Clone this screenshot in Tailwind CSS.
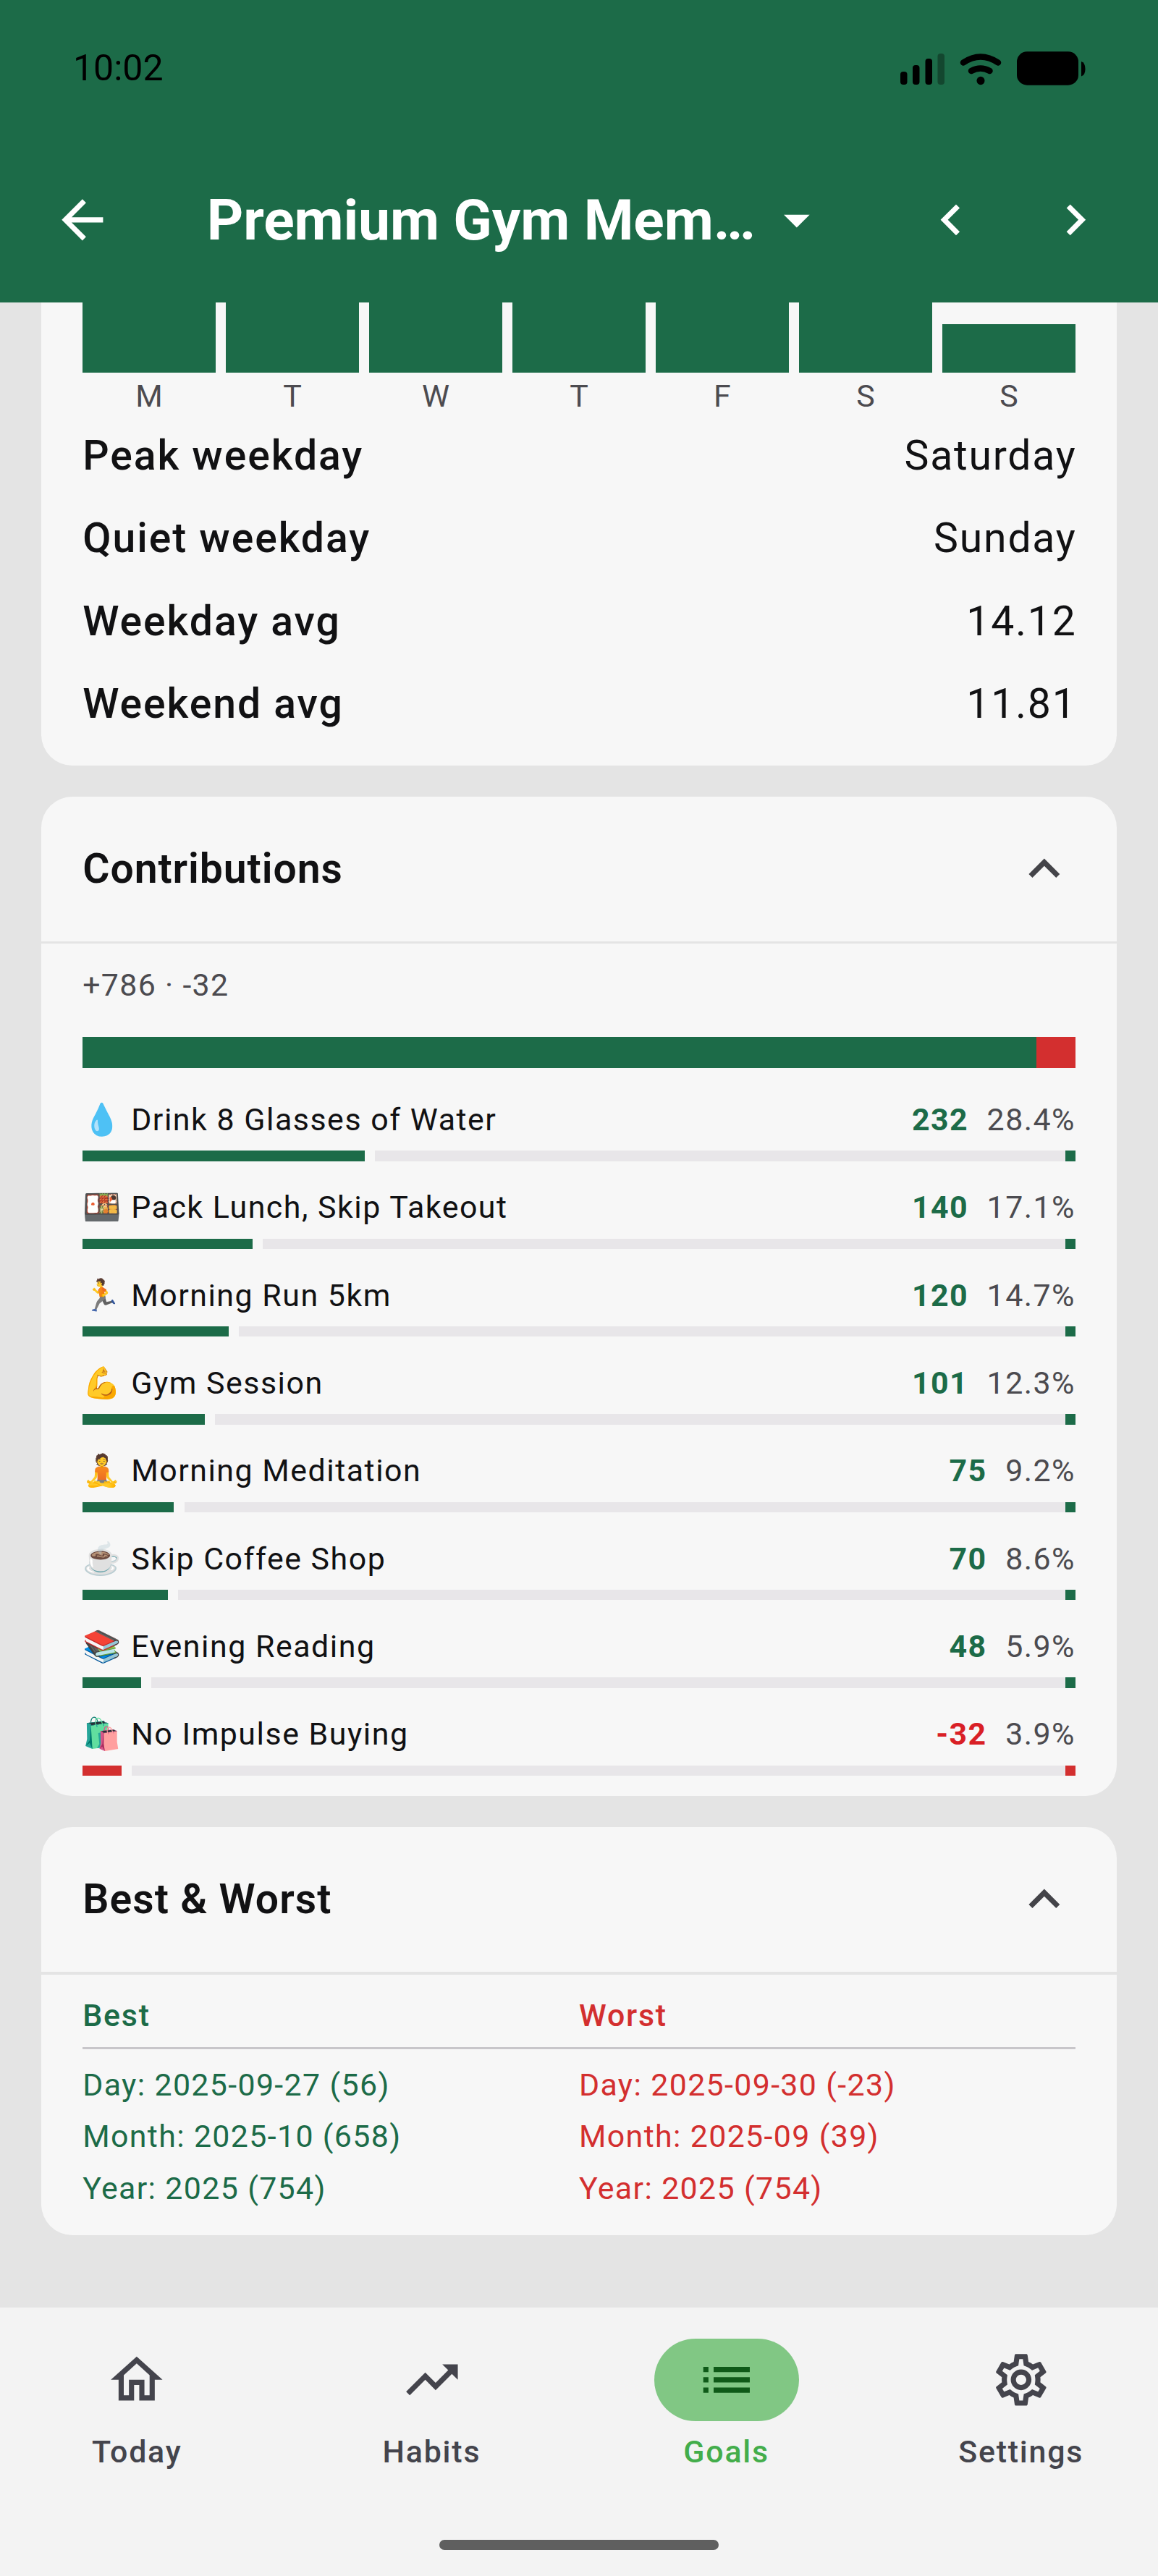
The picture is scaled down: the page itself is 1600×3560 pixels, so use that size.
<!DOCTYPE html>
<html lang="en">

<head>
  <meta charset="UTF-8">
  <meta name="viewport" content="width=device-width, initial-scale=1.0">
  <title>Goal Statistics</title>
  <script src="https://cdn.jsdelivr.net/npm/@tailwindcss/browser@4"></script>
</head>

<body class="bg-[#e4e4e4]">
  <div class="w-[1600px] h-[3560px] flex flex-col overflow-hidden bg-[#e4e4e4] text-[#111113] font-[Roboto,sans-serif]">

    <!-- Header -->
    <header class="h-[418px] shrink-0 bg-[#1c6b48] flex flex-col">
      <div class="h-[189.4px] pb-[2px] pl-[101px] pr-[99px] flex items-center justify-between text-black">
        <span class="text-[50px] leading-[58px]">10:02</span>
        <svg class="w-[258px] h-[50px]" viewBox="1243 68 258 50" fill="currentColor">
          <rect x="1244" y="98" width="9.5" height="18" rx="4" />
          <rect x="1261" y="89" width="9.5" height="27" rx="4" />
          <rect x="1278.5" y="80" width="9.5" height="36" rx="4" />
          <rect x="1295.5" y="73" width="9.5" height="43" rx="4" fill="#13472f" />
          <g fill="none" stroke="currentColor" stroke-width="8.5" stroke-linecap="round">
            <path d="M1331 85.5Q1354.800 69.500 1379 85.500" />
            <path d="M1342 97Q1354.800 90 1367.500 97" />
          </g>
          <ellipse cx="1355" cy="110.500" rx="5.500" ry="5.800" />
          <rect x="1405" y="70.300" width="85" height="46.400" rx="14" />
          <path d="M1494 84q5.500 1.500 5.500 10.300t-5.500 10.300z" />
        </svg>
      </div>
      <div class="h-[228.6px] pl-[28.6px] pr-[28.6px] flex items-center text-white">
        <button class="w-[171.4px] h-[171.4px] flex items-center justify-center">
          <svg class="w-[85.7px] h-[85.7px]" viewBox="0 0 24 24" fill="currentColor"><path d="M20 11H7.830l5.590-5.590L12 4l-8 8 8 8 1.410-1.410L7.830 13H20v-2z" /></svg>
        </button>
        <h1 class="ml-[85.7px] w-[772px] text-[78.6px] leading-[100px] tracking-[-0.12px] font-bold whitespace-nowrap">Premium Gym Mem…</h1>
        <svg class="w-[85.7px] h-[85.7px] shrink-0" viewBox="0 0 24 24" fill="currentColor"><path d="M7 10l5 5 5-5z" /></svg>
        <div class="ml-auto flex">
          <button class="w-[171.4px] h-[171.4px] flex items-center justify-center">
            <svg class="w-[85.7px] h-[85.7px]" viewBox="0 0 24 24" fill="currentColor"><path d="M15.410 7.410L14 6l-6 6 6 6 1.410-1.410L10.830 12z" /></svg>
          </button>
          <button class="w-[171.4px] h-[171.4px] flex items-center justify-center">
            <svg class="w-[85.7px] h-[85.7px]" viewBox="0 0 24 24" fill="currentColor"><path d="M10 6L8.590 7.410 13.170 12l-4.580 4.590L10 18l6-6z" /></svg>
          </button>
        </div>
      </div>
    </header>

    <main class="h-[2771px] shrink-0 px-[57.1px] flex flex-col gap-[42.9px]">

      <!-- Weekdays -->
      <section class="h-[640px] shrink-0 rounded-b-[43px] bg-[#f7f7f7] px-[57.1px]">
        <div id="weekday-bars" class="h-[97.4px] flex items-end gap-[14.3px]"></div>
        <div id="weekday-labels" class="pt-[3.5px] flex gap-[14.3px] text-[42.9px] leading-[57.1px] text-[#4c4b50]"></div>
        <dl class="mt-[11px] flex flex-col gap-[28.6px] text-[57.1px] leading-[85.7px]">
          <div class="flex justify-between"><dt class="font-medium tracking-[1.95px]">Peak weekday</dt><dd class="tracking-[1.79px] -mr-[1.8px]">Saturday</dd></div>
          <div class="flex justify-between"><dt class="font-medium tracking-[1.95px]">Quiet weekday</dt><dd class="tracking-[1.79px] -mr-[1.8px]">Sunday</dd></div>
          <div class="flex justify-between"><dt class="font-medium tracking-[1.95px]">Weekday avg</dt><dd class="tracking-[1.79px] -mr-[1.8px]">14.12</dd></div>
          <div class="flex justify-between"><dt class="font-medium tracking-[1.95px]">Weekend avg</dt><dd class="tracking-[1.79px] -mr-[1.8px]">11.81</dd></div>
        </dl>
      </section>

      <!-- Contributions -->
      <section class="h-[1381.3px] shrink-0 rounded-[43px] bg-[#f7f7f7]">
        <div class="h-[200px] px-[57.1px] flex items-center justify-between">
          <h2 class="text-[57.1px] leading-[85.7px] tracking-[0.92px] font-semibold">Contributions</h2>
          <svg class="w-[85.7px] h-[85.7px] text-[#444449]" viewBox="0 0 24 24" fill="currentColor"><path d="M12 8l-6 6 1.410 1.410L12 10.830l4.590 4.580L18 14z" /></svg>
        </div>
        <div class="h-[3.6px] bg-[#e4e4e4]"></div>
        <div class="px-[57.1px] pt-[28.6px]">
          <p class="text-[42.9px] leading-[57.1px] tracking-[1.3px] text-[#4c4b50]">+786 · -32</p>
          <div class="mt-[42.9px] h-[42.9px] flex">
            <div class="grow bg-[#1c6b48]"></div>
            <div class="bg-[#d32f2f]" style="width: 3.91%"></div>
          </div>
          <ul id="contributions" class="mt-[42.9px] flex flex-col gap-[35.7px]"></ul>
        </div>
      </section>

      <!-- Best & Worst -->
      <section class="h-[563.6px] shrink-0 rounded-[43px] bg-[#f7f7f7]">
        <div class="h-[200px] px-[57.1px] flex items-center justify-between">
          <h2 class="text-[57.1px] leading-[85.7px] tracking-[1.05px] font-semibold">Best &amp; Worst</h2>
          <svg class="w-[85.7px] h-[85.7px] text-[#444449]" viewBox="0 0 24 24" fill="currentColor"><path d="M12 8l-6 6 1.410 1.410L12 10.830l4.590 4.580L18 14z" /></svg>
        </div>
        <div class="h-[3.6px] bg-[#e4e4e4]"></div>
        <div class="px-[57.1px] pt-[28.6px] text-[42.9px] leading-[57.1px]">
          <div class="grid grid-cols-2 font-medium tracking-[1.79px]">
            <span class="text-[#1c6b48]">Best</span>
            <span class="text-[#d32f2f]">Worst</span>
          </div>
          <div class="mt-[14.3px] h-[3.6px] bg-[#c8c6ca]"></div>
          <div class="mt-[20.5px] grid grid-cols-2 gap-y-[14.3px] tracking-[1.35px]">
            <span class="text-[#1c6b48]">Day: 2025-09-27 (56)</span>
            <span class="text-[#d32f2f]">Day: 2025-09-30 (-23)</span>
            <span class="text-[#1c6b48]">Month: 2025-10 (658)</span>
            <span class="text-[#d32f2f]">Month: 2025-09 (39)</span>
            <span class="text-[#1c6b48]">Year: 2025 (754)</span>
            <span class="text-[#d32f2f]">Year: 2025 (754)</span>
          </div>
        </div>
      </section>
    </main>

    <!-- Bottom navigation -->
    <nav class="grow bg-[#f3f3f3] pt-[42.5px] flex flex-col items-center text-[#44444c]">
      <div class="w-full grid grid-cols-4 gap-[28.6px] text-[42.9px] leading-[57.1px] tracking-[1.79px] font-medium">
        <a class="flex flex-col items-center gap-[14.3px]">
          <span class="w-[200px] h-[114.3px] flex items-center justify-center">
            <svg class="w-[85.7px] h-[85.7px]" viewBox="0 0 24 24" fill="currentColor"><path d="M12 5.690l5 4.500V18h-2v-6H9v6H7v-7.810l5-4.500M12 3L2 12h3v8h6v-6h2v6h6v-8h3L12 3z" /></svg>
          </span>
          <span>Today</span>
        </a>
        <a class="flex flex-col items-center gap-[14.3px]">
          <span class="w-[200px] h-[114.3px] flex items-center justify-center">
            <svg class="w-[85.7px] h-[85.7px]" viewBox="0 0 24 24" fill="currentColor"><path d="M16 6l2.290 2.290-4.880 4.880-4-4L2 16.590 3.410 18l6-6 4 4 6.300-6.290L22 12V6z" /></svg>
          </span>
          <span>Habits</span>
        </a>
        <a class="flex flex-col items-center gap-[14.3px]">
          <span class="w-[200px] h-[114.3px] rounded-full bg-[#81c784] text-[#0f5a18] flex items-center justify-center">
            <svg class="w-[85.7px] h-[85.7px]" viewBox="0 0 24 24" fill="currentColor"><path d="M3 13h2v-2H3v2zm0 4h2v-2H3v2zm0-8h2V7H3v2zm4 4h14v-2H7v2zm0 4h14v-2H7v2zM7 7v2h14V7H7z" /></svg>
          </span>
          <span class="text-[#43ad4b]">Goals</span>
        </a>
        <a class="flex flex-col items-center gap-[14.3px]">
          <span class="w-[200px] h-[114.3px] flex items-center justify-center">
            <svg class="w-[85.7px] h-[85.7px]" viewBox="0 0 24 24" fill="currentColor"><path d="M19.430 12.980c.04-.32.07-.64.07-.98 0-.34-.03-.66-.07-.98l2.110-1.650c.19-.15.24-.42.12-.64l-2-3.460c-.09-.16-.26-.25-.44-.25-.06 0-.12.01-.17.03l-2.490 1c-.52-.4-1.080-.73-1.690-.98l-.38-2.650C14.460 2.180 14.250 2 14 2h-4c-.25 0-.46.18-.49.42l-.38 2.650c-.61.25-1.170.59-1.690.98l-2.490-1c-.06-.02-.12-.03-.18-.03-.17 0-.34.09-.43.25l-2 3.460c-.13.22-.07.49.12.64l2.110 1.650c-.04.32-.07.65-.07.98 0 .33.03.66.07.98l-2.110 1.650c-.19.15-.24.42-.12.64l2 3.460c.09.16.26.25.44.25.06 0 .12-.01.17-.03l2.490-1c.52.4 1.080.73 1.690.98l.38 2.650c.03.24.24.42.49.42h4c.25 0 .46-.18.49-.42l.38-2.650c.61-.25 1.170-.59 1.690-.98l2.490 1c.06.02.12.03.18.03.17 0 .34-.09.43-.25l2-3.460c.12-.22.07-.49-.12-.64l-2.110-1.650zm-1.980-1.710c.04.31.05.52.05.73 0 .21-.02.43-.05.73l-.14 1.130.89.7 1.080.84-.7 1.210-1.270-.51-1.040-.42-.9.68c-.43.32-.84.56-1.250.73l-1.060.43-.16 1.130-.2 1.350h-1.400l-.19-1.350-.16-1.130-1.060-.43c-.43-.18-.83-.41-1.230-.71l-.91-.7-1.060.43-1.270.51-.7-1.210 1.080-.84.89-.7-.14-1.130c-.03-.31-.05-.54-.05-.74s.02-.43.05-.73l.14-1.130-.89-.7-1.080-.84.7-1.210 1.270.51 1.040.42.9-.68c.43-.32.84-.56 1.250-.73l1.060-.43.16-1.130.2-1.350h1.390l.19 1.350.16 1.130 1.060.43c.43.18.83.41 1.230.71l.91.7 1.060-.43 1.270-.51.7 1.210-1.070.85-.89.7.14 1.130zM12 8c-2.210 0-4 1.790-4 4s1.790 4 4 4 4-1.790 4-4-1.790-4-4-4zm0 6c-1.100 0-2-.9-2-2s.9-2 2-2 2 .9 2 2-.9 2-2 2z" /></svg>
          </span>
          <span>Settings</span>
        </a>
      </div>
      <div class="mt-[93px] w-[385.700px] h-[14.300px] rounded-full bg-[#5f5f5f]"></div>
    </nav>
  </div>

  <script>
    // Visible bar heights in px, clipped by the header
    const weekdays = [
      { label: 'M', height: 97.4 },
      { label: 'T', height: 97.4 },
      { label: 'W', height: 97.4 },
      { label: 'T', height: 97.4 },
      { label: 'F', height: 97.4 },
      { label: 'S', height: 97.4 },
      { label: 'S', height: 67.4 }
    ];

    const contributions = [
      { icon: '💧', name: 'Drink 8 Glasses of Water', value: 232, percent: '28.4' },
      { icon: '🍱', name: 'Pack Lunch, Skip Takeout', value: 140, percent: '17.1' },
      { icon: '🏃', name: 'Morning Run 5km', value: 120, percent: '14.7' },
      { icon: '💪', name: 'Gym Session', value: 101, percent: '12.3' },
      { icon: '🧘', name: 'Morning Meditation', value: 75, percent: '9.2' },
      { icon: '☕', name: 'Skip Coffee Shop', value: 70, percent: '8.6' },
      { icon: '📚', name: 'Evening Reading', value: 48, percent: '5.9' },
      { icon: '🛍️', name: 'No Impulse Buying', value: -32, percent: '3.9' }
    ];

    document.getElementById('weekday-bars').innerHTML = weekdays.map(day =>
      `<div class="flex-1 bg-[#1c6b48]" style="height: ${day.height}px"></div>`
    ).join('');

    document.getElementById('weekday-labels').innerHTML = weekdays.map(day =>
      `<span class="flex-1 text-center">${day.label}</span>`
    ).join('');

    document.getElementById('contributions').innerHTML = contributions.map(item => {
      const text = item.value < 0 ? 'text-[#d91f26]' : 'text-[#1c6b48]';
      const bar = item.value < 0 ? 'bg-[#d32f2f]' : 'bg-[#1c6b48]';
      return `
        <li>
          <div class="h-[57.1px] flex items-center text-[42.9px] leading-[57.1px] tracking-[1.43px]">
            <span class="w-[67px] whitespace-nowrap">${item.icon}</span>
            <span class="grow tracking-[1.52px]">${item.name}</span>
            <span class="${text} font-bold">${item.value}</span>
            <span class="ml-[25.5px] text-[#4c4b50]">${item.percent}%</span>
          </div>
          <div class="mt-[14.3px] h-[14.3px] flex gap-[14.3px]">
            <div class="${bar}" style="width: ${item.percent}%"></div>
            <div class="flex-1 bg-[#e8e6e9] flex justify-end">
              <div class="w-[14.3px] ${bar}"></div>
            </div>
          </div>
        </li>
      `;
    }).join('');
  </script>
</body>

</html>
